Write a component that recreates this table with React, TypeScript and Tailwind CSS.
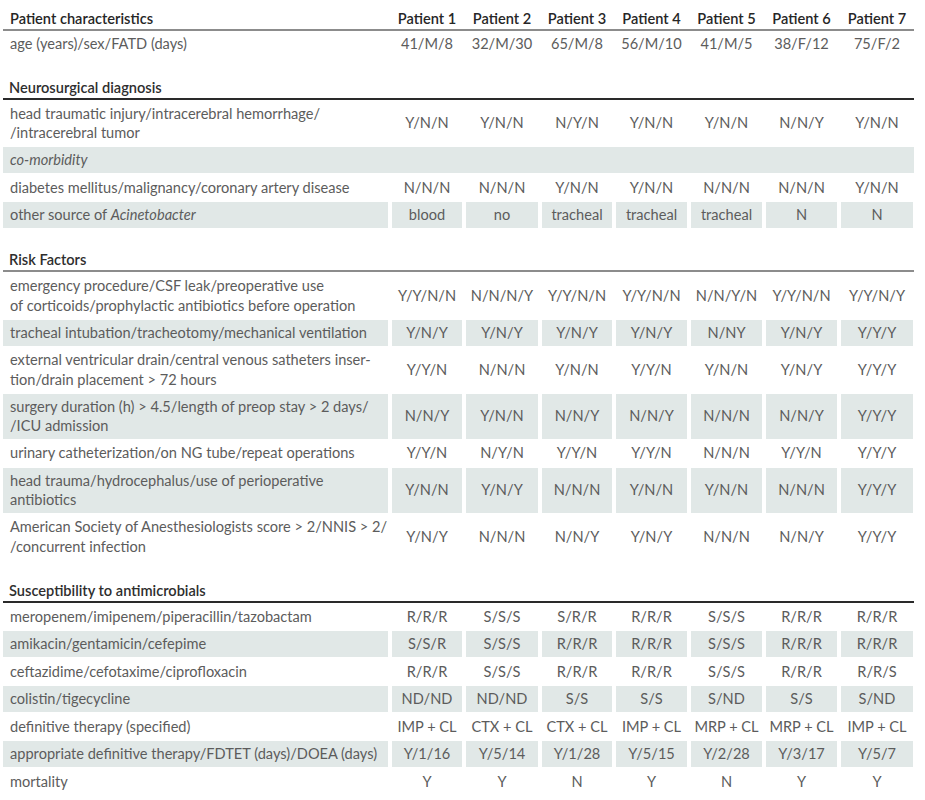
import React from "react";

type Row = {
  label: React.ReactNode;
  values: string[];
  shaded?: boolean;
  tall?: boolean;
};

const cols = "grid grid-cols-[385px_70px_72px_70px_71px_71px_71px_72px] gap-x-[4px]";

const patients = ["Patient 1", "Patient 2", "Patient 3", "Patient 4", "Patient 5", "Patient 6", "Patient 7"];

const neuro: Row[] = [
  {
    label: (
      <>
        head traumatic injury/intracerebral hemorrhage/
        <br />
        /intracerebral tumor
      </>
    ),
    values: ["Y/N/N", "Y/N/N", "N/Y/N", "Y/N/N", "Y/N/N", "N/N/Y", "Y/N/N"],
    tall: true,
  },
  {
    label: "diabetes mellitus/malignancy/coronary artery disease",
    values: ["N/N/N", "N/N/N", "Y/N/N", "Y/N/N", "N/N/N", "N/N/N", "Y/N/N"],
  },
  {
    label: (
      <>
        other source of <i>Acinetobacter</i>
      </>
    ),
    values: ["blood", "no", "tracheal", "tracheal", "tracheal", "N", "N"],
    shaded: true,
  },
];

const risk: Row[] = [
  {
    label: (
      <>
        emergency procedure/CSF leak/preoperative use
        <br />
        of corticoids/prophylactic antibiotics before operation
      </>
    ),
    values: ["Y/Y/N/N", "N/N/N/Y", "Y/Y/N/N", "Y/Y/N/N", "N/N/Y/N", "Y/Y/N/N", "Y/Y/N/Y"],
    tall: true,
  },
  {
    label: "tracheal intubation/tracheotomy/mechanical ventilation",
    values: ["Y/N/Y", "Y/N/Y", "Y/N/Y", "Y/N/Y", "N/NY", "Y/N/Y", "Y/Y/Y"],
    shaded: true,
  },
  {
    label: (
      <>
        external ventricular drain/central venous satheters inser-
        <br />
        tion/drain placement &gt; 72 hours
      </>
    ),
    values: ["Y/Y/N", "N/N/N", "Y/N/N", "Y/Y/N", "Y/N/N", "Y/N/Y", "Y/Y/Y"],
    tall: true,
  },
  {
    label: (
      <>
        surgery duration (h) &gt; 4.5/length of preop stay &gt; 2 days/
        <br />
        /ICU admission
      </>
    ),
    values: ["N/N/Y", "Y/N/N", "N/N/Y", "N/N/Y", "N/N/N", "N/N/Y", "Y/Y/Y"],
    shaded: true,
    tall: true,
  },
  {
    label: "urinary catheterization/on NG tube/repeat operations",
    values: ["Y/Y/N", "N/Y/N", "Y/Y/N", "Y/Y/N", "N/N/N", "Y/Y/N", "Y/Y/Y"],
  },
  {
    label: (
      <>
        head trauma/hydrocephalus/use of perioperative
        <br />
        antibiotics
      </>
    ),
    values: ["Y/N/N", "Y/N/Y", "N/N/N", "Y/N/N", "Y/N/N", "N/N/N", "Y/Y/Y"],
    shaded: true,
    tall: true,
  },
  {
    label: (
      <>
        American Society of Anesthesiologists score &gt; 2/NNIS &gt; 2/
        <br />
        /concurrent infection
      </>
    ),
    values: ["Y/N/Y", "N/N/N", "N/N/Y", "Y/N/Y", "N/N/N", "N/N/Y", "Y/Y/Y"],
    tall: true,
  },
];

const suscept: Row[] = [
  {
    label: "meropenem/imipenem/piperacillin/tazobactam",
    values: ["R/R/R", "S/S/S", "S/R/R", "R/R/R", "S/S/S", "R/R/R", "R/R/R"],
  },
  {
    label: "amikacin/gentamicin/cefepime",
    values: ["S/S/R", "S/S/S", "R/R/R", "R/R/R", "S/S/S", "R/R/R", "R/R/R"],
    shaded: true,
  },
  {
    label: "ceftazidime/cefotaxime/ciprofloxacin",
    values: ["R/R/R", "S/S/S", "R/R/R", "R/R/R", "S/S/S", "R/R/R", "R/R/S"],
  },
  {
    label: "colistin/tigecycline",
    values: ["ND/ND", "ND/ND", "S/S", "S/S", "S/ND", "S/S", "S/ND"],
    shaded: true,
  },
  {
    label: "definitive therapy (specified)",
    values: ["IMP + CL", "CTX + CL", "CTX + CL", "IMP + CL", "MRP + CL", "MRP + CL", "IMP + CL"],
  },
  {
    label: "appropriate definitive therapy/FDTET (days)/DOEA (days)",
    values: ["Y/1/16", "Y/5/14", "Y/1/28", "Y/5/15", "Y/2/28", "Y/3/17", "Y/5/7"],
    shaded: true,
  },
  {
    label: "mortality",
    values: ["Y", "Y", "N", "Y", "N", "Y", "Y"],
  },
];

function DataRow({ row }: { row: Row }) {
  const bg = row.shaded ? "bg-[#e1e8e7]" : "";
  const h = row.tall ? "h-[45px]" : "h-[26px]";
  return (
    <div className={cols}>
      <div className={`${bg} ${h} flex items-center pl-[7px] leading-[19.5px] whitespace-nowrap`}>
        <span>{row.label}</span>
      </div>
      {row.values.map((v, i) => (
        <div key={i} className={`${bg} ${h} flex items-center justify-center whitespace-nowrap`}>
          {v}
        </div>
      ))}
    </div>
  );
}

function Section({
  title,
  dark,
  rows,
  gapTop,
  children,
}: {
  title: string;
  dark?: boolean;
  rows: Row[];
  gapTop: string;
  children?: React.ReactNode;
}) {
  return (
    <div className={gapTop}>
      <div className="h-[20px] leading-[20px] pl-[6px] font-semibold text-[#2e2e2e]">{title}</div>
      <div className={dark ? "h-[1.5px] bg-[#2a2a2a]" : "h-[2px] bg-[#8c8c8c]"} />
      <div className="flex flex-col gap-y-[1.5px] pt-[1px]">
        {rows.slice(0, 1).map((r, i) => (
          <DataRow key={i} row={r} />
        ))}
        {children}
        {rows.slice(1).map((r, i) => (
          <DataRow key={i} row={r} />
        ))}
      </div>
    </div>
  );
}

export default function App() {
  return (
    <div
      className="w-[925px] h-[800px] bg-white overflow-hidden text-[14.6px] text-[#5c5c5c]"
      style={{ fontFamily: "Lato, 'Open Sans', sans-serif" }}
    >
      <div className="w-[911px] ml-[3px] pt-[9px]">
        {/* Header */}
        <div className={`${cols} h-[20px] leading-[20px] font-semibold text-[#262626]`}>
          <div className="pl-[7px]">Patient characteristics</div>
          {patients.map((p) => (
            <div key={p} className="text-center whitespace-nowrap">
              {p}
            </div>
          ))}
        </div>
        <div className="h-[2px] bg-[#8c8c8c]" />
        <DataRow
          row={{
            label: "age (years)/sex/FATD (days)",
            values: ["41/M/8", "32/M/30", "65/M/8", "56/M/10", "41/M/5", "38/F/12", "75/F/2"],
          }}
        />

        <Section title="Neurosurgical diagnosis" dark rows={neuro} gapTop="mt-[21px]">
          <div className="h-[26px] bg-[#e1e8e7] flex items-center pl-[7px] italic">co-morbidity</div>
        </Section>

        <Section title="Risk Factors" rows={risk} gapTop="mt-[22px]" />

        <Section title="Susceptibility to antimicrobials" dark rows={suscept} gapTop="mt-[22px]" />
      </div>
    </div>
  );
}
